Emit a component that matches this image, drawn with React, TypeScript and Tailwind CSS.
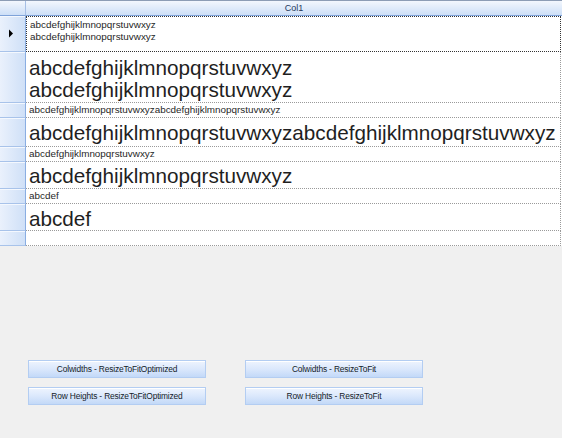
const alpha = "abcdefghijklmnopqrstuvwxyz";

interface GridRow {
  h: string;
  pad: string;
  big: boolean;
  lines: string[];
}

const rows: GridRow[] = [
  { h: "h-[36px]", pad: "pt-[2px]", big: false, lines: [alpha, alpha] },
  { h: "h-[51px]", pad: "pt-[5px]", big: true, lines: [alpha, alpha] },
  { h: "h-[15px]", pad: "items-center", big: false, lines: [alpha + alpha] },
  { h: "h-[29px]", pad: "pt-[4px]", big: true, lines: [alpha + alpha] },
  { h: "h-[15px]", pad: "items-center", big: false, lines: [alpha] },
  { h: "h-[27px]", pad: "pt-[3px]", big: true, lines: [alpha] },
  { h: "h-[15px]", pad: "items-center", big: false, lines: ["abcdef"] },
  { h: "h-[27px]", pad: "pt-[4px]", big: true, lines: ["abcdef"] },
  { h: "h-[15px]", pad: "items-center", big: false, lines: [] },
];

const Btn = ({ label }: { label: string }) => (
  <button className="h-[18px] w-[178px] border border-[#b3cdf2] bg-gradient-to-b from-[#eef4fe] via-[#dbe8fc] to-[#c3d9f8] text-[8.4px] tracking-[-0.15px] text-[#141c2a] shadow-[inset_0_1px_0_#ffffff]">
    {label}
  </button>
);

const App = () => {
  return (
    <div className="flex h-[438px] w-[562px] flex-col bg-[#f0f0f0] font-['Liberation_Sans',Arial,sans-serif]">
      <div className="flex flex-col bg-white">
        {/* header */}
        <div className="flex h-[16px] border-t border-[#8d9db5]">
          <div className="w-[26px] border-r border-b border-r-[#a6bfe5] border-b-[#7fa3d9] bg-gradient-to-b from-[#f3f7fd] to-[#cddff7]" />
          <div className="flex flex-1 items-center justify-center border-b border-[#7fa3d9] bg-gradient-to-b from-[#f3f7fd] to-[#cddff7] text-[9px] leading-none text-[#1e395b]">
            Col1
          </div>
        </div>
        {rows.map((r, i) => (
          <div key={i} className={`flex ${r.h}`}>
            <div className="flex w-[26px] items-center justify-center border-r border-b border-r-[#8aaee2] border-b-[#a8c3ea] bg-gradient-to-r from-[#eaf1fc] to-[#cfe0f7] shadow-[inset_0_1px_0_#f4f8fe]">
              {i === 0 && (
                <svg width="6" height="9" viewBox="0 0 6 9" className="-ml-[4px]">
                  <polygon points="1,0.5 5,4.5 1,8.5" fill="#000" />
                </svg>
              )}
            </div>
            <div
              className={`flex flex-1 ${r.pad} pl-[3px] ${
                i === 0
                  ? "border border-dotted border-[#333]"
                  : "border-r border-b border-dotted border-[#9a9a9a]"
              } mr-[1px]`}
            >
              <div
                className={`flex flex-col whitespace-nowrap text-[#1f1f1f] ${
                  r.big ? "text-[20.7px] leading-[22px]" : "text-[9.9px] leading-[12px]"
                }`}
              >
                {r.lines.map((l, j) => (
                  <span key={j}>{l}</span>
                ))}
              </div>
            </div>
          </div>
        ))}
      </div>
      <div className="grid grid-cols-[178px_178px] gap-x-[39px] gap-y-[9px] pt-[114px] pl-[28px]">
        <Btn label="Colwidths - ResizeToFitOptimized" />
        <Btn label="Colwidths - ResizeToFit" />
        <Btn label="Row Heights - ResizeToFitOptimized" />
        <Btn label="Row Heights - ResizeToFit" />
      </div>
    </div>
  );
};

export default App;
